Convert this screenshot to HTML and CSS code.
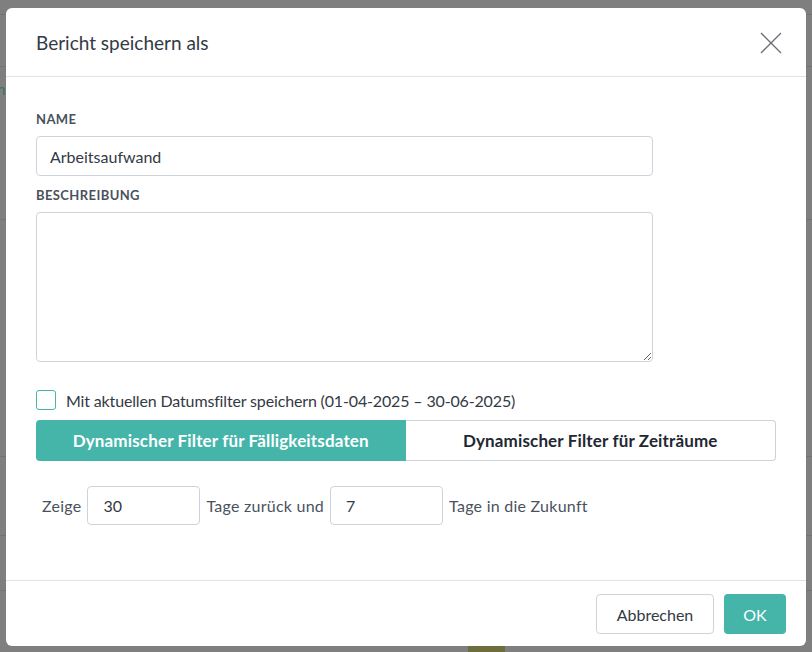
FILE: index.html
```html
<!DOCTYPE html>
<html lang="de">
<head>
    <meta charset="UTF-8">
    <title>Bericht speichern als</title>
    <link rel="stylesheet" href="styles.css">
</head>
<body>
    <div class="page-behind">
        <span class="behind-text">n</span>
        <span class="behind-tab"></span>
    </div>

    <div class="modal">
        <div class="modal-header">
            <h2 class="modal-title">Bericht speichern als</h2>
            <button class="close-btn" aria-label="Schließen">
                <svg width="22" height="22" viewBox="0 0 22 22">
                    <path d="M1 1 L21 21 M21 1 L1 21" stroke="#6b6f75" stroke-width="1.3" fill="none"/>
                </svg>
            </button>
        </div>

        <div class="modal-body">
            <label class="field-label">Name</label>
            <input class="text-input" type="text" value="Arbeitsaufwand">

            <label class="field-label label-desc">Beschreibung</label>
            <textarea class="text-area"></textarea>

            <div class="check-row">
                <span class="check-box"></span>
                <span>Mit aktuellen Datumsfilter speichern (01-04-2025 – 30-06-2025)</span>
            </div>

            <div class="toggle">
                <div class="toggle-item active">Dynamischer Filter für Fälligkeitsdaten</div>
                <div class="toggle-item">Dynamischer Filter für Zeiträume</div>
            </div>

            <div class="days-row">
                <span>Zeige</span>
                <input class="small-input" type="text" value="30">
                <span>Tage zurück und</span>
                <input class="small-input" type="text" value="7">
                <span>Tage in die Zukunft</span>
            </div>
        </div>

        <div class="modal-footer">
            <button class="btn btn-cancel">Abbrechen</button>
            <button class="btn btn-ok">OK</button>
        </div>
    </div>
</body>
</html>
```

FILE: styles.css
```css
html, body {
    margin: 0;
    height: 652px;
    overflow: hidden;
}

body {
    background-color: #7f7f7f;
    font-family: Lato, "Liberation Sans", sans-serif;
    color: #333a44;
    position: relative;
    padding: 8px 6px 0;
    box-sizing: border-box;
}

/* the page that lies under the dialog */
.page-behind {
    position: absolute;
    inset: 0;
    background-image:
        linear-gradient(#737373, #737373),
        linear-gradient(#737373, #737373),
        linear-gradient(#737373, #737373),
        linear-gradient(#737373, #737373),
        linear-gradient(#737373, #737373),
        linear-gradient(#737373, #737373);
    background-repeat: no-repeat;
    background-size: 100% 1px;
    background-position: 0 14px, 0 66px, 0 219px, 0 456px, 0 535px, 0 590px;
}

.behind-text {
    position: absolute;
    left: -3px;
    top: 80px;
    color: #3e6f6a;
    font-size: 15px;
}

.behind-tab {
    position: absolute;
    left: 468px;
    top: 646px;
    width: 37px;
    height: 6px;
    background: #6e6d3c;
}

.modal {
    position: relative;
    width: 800px;
    height: 638px;
    background: #fff;
    border-radius: 6px;
    display: flex;
    flex-direction: column;
}

.modal-header {
    height: 68px;
    padding: 0 24px 0 30px;
    border-bottom: 1px solid #dfe3e8;
    display: flex;
    align-items: center;
    justify-content: space-between;
}

.modal-title {
    margin: 0;
    font-size: 19px;
    font-weight: 400;
    color: #333a44;
}

.close-btn {
    border: none;
    background: none;
    padding: 0;
    width: 22px;
    height: 22px;
    margin-top: 2px;
}

.modal-body {
    flex: 1;
    padding: 33px 30px 0;
}

.field-label {
    display: block;
    font-size: 13px;
    font-weight: 700;
    letter-spacing: 0.4px;
    text-transform: uppercase;
    color: #4a525d;
    line-height: 18px;
    margin-bottom: 8px;
}

.label-desc {
    margin-top: 10px;
}

.text-input, .text-area, .small-input {
    box-sizing: border-box;
    border: 1px solid #cdd3db;
    border-radius: 4px;
    font-family: inherit;
    font-size: 16px;
    color: #333a44;
    outline: none;
}

.text-input {
    display: block;
    width: 617px;
    height: 40px;
    padding: 0 13px;
}

.text-area {
    display: block;
    width: 617px;
    height: 150px;
    resize: vertical;
}

.check-row {
    margin-top: 28px;
    display: flex;
    align-items: center;
    gap: 10px;
    font-size: 16px;
    letter-spacing: -0.15px;
    height: 20px;
}

.check-box {
    width: 20px;
    height: 20px;
    box-sizing: border-box;
    border: 1px solid #45b5aa;
    border-radius: 3px;
}

.toggle {
    margin-top: 10px;
    width: 740px;
    height: 41px;
    display: flex;
}

.toggle-item {
    flex: 1;
    display: flex;
    align-items: center;
    justify-content: center;
    font-size: 17px;
    font-weight: 700;
    letter-spacing: 0.15px;
    color: #222831;
    border: 1px solid #cdd3db;
    border-left: none;
    border-radius: 0 4px 4px 0;
}

.toggle-item.active {
    background: #45b5aa;
    color: #fff;
    border: none;
    border-radius: 4px 0 0 4px;
}

.days-row {
    margin-top: 25px;
    padding-left: 6px;
    display: flex;
    align-items: center;
    gap: 6px;
    font-size: 16px;
    letter-spacing: 0.25px;
    color: #4a525d;
}

.small-input {
    width: 113px;
    height: 39px;
    padding: 0 15px;
}

.modal-footer {
    height: 66px;
    border-top: 1px solid #dfe3e8;
    box-sizing: border-box;
    padding: 13px 20px 0;
    display: flex;
    justify-content: flex-end;
    gap: 10px;
}

.btn {
    height: 40px;
    border-radius: 4px;
    font-family: inherit;
    font-size: 16px;
    padding: 0;
}

.btn-cancel {
    width: 118px;
    background: #fff;
    border: 1px solid #cdd3db;
    color: #333a44;
}

.btn-ok {
    width: 62px;
    background: #45b5aa;
    border: none;
    color: #fff;
}
```
